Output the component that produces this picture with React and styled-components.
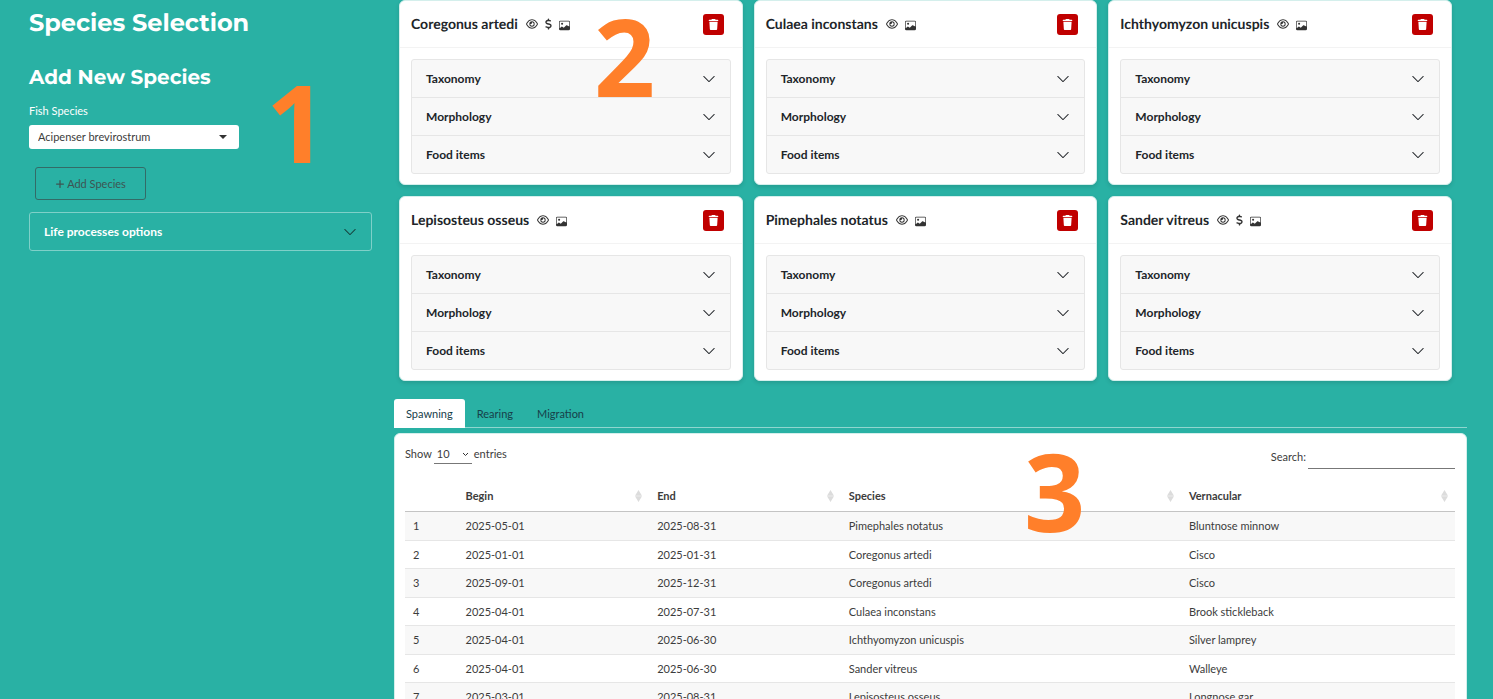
import React from "react";
import styled, { createGlobalStyle } from "styled-components";
import { BsChevronDown, BsImage } from "react-icons/bs";
import { FaDollarSign, FaPlus, FaRegEye, FaTrash } from "react-icons/fa6";

const GlobalStyle = createGlobalStyle`
  *, *::before, *::after { box-sizing: border-box; }
  html { scrollbar-width: none; }
  body {
    margin: 0;
    background: #29b1a4;
    color: #3c3c3c;
    font-family: Lato, "Open Sans", sans-serif;
    font-size: 11px;
    line-height: 18px;
  }
  button, input, select { font: inherit; color: inherit; }
  h1, h2, h3 { text-rendering: geometricPrecision; }
`;

const Page = styled.div`
  position: relative;
  display: grid;
  grid-template-columns: 343fr 1073fr;
  column-gap: 22px;
  height: 100vh;
  overflow: hidden;
  padding: 0 26px 0 29px;
`;

const Sidebar = styled.aside`
  position: relative;
  display: flex;
  flex-direction: column;
  align-items: flex-start;
  color: #fff;
`;

const Main = styled.main`
  position: relative;
  min-width: 0;
`;

const Title = styled.h1`
  margin: 9px 0 24px;
  font: 700 24px/30px Montserrat, Inter, sans-serif;
`;

const Subtitle = styled.h2`
  margin: 0 0 9px;
  font: 700 20px/30px Montserrat, Inter, sans-serif;
`;

const Label = styled.label`
  margin: 0 0 5px;
`;

const SelectBox = styled.div`
  position: relative;
  width: 210px;
  max-width: 100%;
`;

const Select = styled.select`
  display: block;
  width: 100%;
  height: 24px;
  padding: 0 9px;
  appearance: none;
  border: 0;
  border-radius: 3px;
  background: #fff;
  color: #3c3c3c;
`;

const Caret = styled.svg`
  position: absolute;
  top: 10px;
  right: 12px;
  width: 8px;
  height: 4px;
  fill: #333;
  pointer-events: none;
`;

const AddButton = styled.button`
  display: flex;
  align-items: center;
  justify-content: center;
  gap: 2px;
  width: 111px;
  height: 33px;
  margin: 18px 6px 12px;
  padding: 0;
  border: 1px solid #336b67;
  border-radius: 3px;
  background: transparent;
  color: #3d5452;
`;

const OptionsToggle = styled.button`
  display: flex;
  align-items: center;
  justify-content: space-between;
  width: 100%;
  height: 39px;
  padding: 0 14px;
  border: 1px solid #7fd0c8;
  border-radius: 3px;
  background: transparent;
  color: #fff;
  font-size: 12px;
  font-weight: 700;

  svg { color: #15403c; }
`;

const Cards = styled.div`
  display: grid;
  grid-template-columns: repeat(3, 1fr);
  gap: 11px;
  padding: 0 15px 0 5px;
`;

const Card = styled.article`
  border: 1px solid #d4efec;
  border-radius: 6px;
  background: #fff;
  box-shadow: 0 2px 4px rgba(0, 0, 0, 0.12);
`;

const CardHeader = styled.header`
  display: flex;
  align-items: center;
  height: 47px;
  padding: 0 18px 0 11px;
  border-bottom: 1px solid #f3f3f3;
  color: #212529;
`;

const CardName = styled.h3`
  margin: 0 8px 0 0;
  font-size: 14px;
  line-height: 20px;
  font-weight: 700;
`;

const Traits = styled.div`
  display: flex;
  align-items: center;
  gap: 7px;
  flex: 1;
  color: #333;
`;

const DollarIcon = styled(FaDollarSign)`
  width: 7px;
  height: 12px;
`;

const PhotoIcon = styled(BsImage)`
  margin-top: 3px;
`;

const DeleteButton = styled.button`
  display: grid;
  place-items: center;
  width: 21px;
  height: 21px;
  padding: 0;
  border: 0;
  border-radius: 3px;
  background: #c00000;
  color: #fff;
`;

const Sections = styled.div`
  margin: 11px 11px 10px;
  border: 1px solid #e6e6e6;
  border-radius: 3px;
  background: #f8f8f8;
`;

const SectionToggle = styled.button`
  display: flex;
  align-items: center;
  justify-content: space-between;
  width: 100%;
  height: 38px;
  padding: 0 14px;
  border: 0;
  border-bottom: 1px solid #e6e6e6;
  background: transparent;
  color: #212529;
  font-size: 12px;
  font-weight: 700;

  &:last-child {
    height: 37px;
    border-bottom: 0;
  }
`;

const Tabs = styled.div`
  display: flex;
  height: 29px;
  margin: 18px 0 5px;
  border-bottom: 1px solid #8fd6cf;
`;

const Tab = styled.button`
  height: 29px;
  padding: 0 12px;
  border: 0;
  border-radius: 3px 3px 0 0;
  background: ${(p) => (p.$active ? "#fff" : "transparent")};
  color: #17404a;
`;

const Panel = styled.section`
  padding: 10px 11px 10px 10px;
  border: 1px solid #d4efec;
  border-radius: 6px;
  background: #fff;
`;

const Controls = styled.div`
  display: flex;
  justify-content: space-between;
  height: 43px;
`;

const LengthLabel = styled.label`
  display: flex;
  align-items: center;
  gap: 2px;
  height: 20px;
`;

const LengthBox = styled.span`
  position: relative;
`;

const LengthSelect = styled.select`
  display: block;
  width: 38px;
  height: 20px;
  padding: 0 3px;
  appearance: none;
  border: 0;
  border-bottom: 1px solid #777;
  border-radius: 0;
  background: transparent;
`;

const SmallChevron = styled.svg`
  position: absolute;
  top: 8px;
  right: 3px;
  width: 7px;
  height: 5px;
  fill: none;
  stroke: #333;
  pointer-events: none;
`;

const SearchLabel = styled.label`
  display: flex;
  align-items: center;
  gap: 2px;
  height: 25px;
`;

const SearchInput = styled.input`
  width: 147px;
  height: 25px;
  padding: 0 3px;
  border: 0;
  border-bottom: 1px solid #777;
  border-radius: 0;
  background: transparent;
  outline: 0;
`;

const Table = styled.table`
  width: 100%;
  table-layout: fixed;
  border-collapse: separate;
  border-spacing: 0;
`;

const Head = styled.th`
  width: ${(p) => p.$width};
  height: 21px;
  padding: 0 7px 6px 8px;
  border-bottom: 1px solid #c4c4c4;
  text-align: left;
  font-weight: 700;
`;

const HeadInner = styled.span`
  display: flex;
  align-items: center;
  justify-content: space-between;
`;

const Row = styled.tr`
  height: 28px;

  &:nth-child(odd) {
    height: 29px;
    background: #f8f8f8;
  }
`;

const Cell = styled.td`
  padding: 0 7px 0 8px;
  border-bottom: 1px solid #e6e6e6;
`;

const Marker = styled.span`
  position: absolute;
  top: ${(p) => p.$top}px;
  left: ${(p) => p.$left}px;
  color: #ff7f2a;
  font: 700 107px/108px "Open Sans", sans-serif;
  pointer-events: none;
`;

const SortIcon = () => (
  <svg width="7" height="12" viewBox="0 0 7 12" fill="#dcdcdc" aria-hidden="true">
    <path d="M3.5 0 7 5.7H0zM0 6.3h7L3.5 12z" />
  </svg>
);

const fish = [
  { name: "Coregonus artedi", commercial: true },
  { name: "Culaea inconstans" },
  { name: "Ichthyomyzon unicuspis" },
  { name: "Lepisosteus osseus" },
  { name: "Pimephales notatus" },
  { name: "Sander vitreus", commercial: true },
];

const sections = ["Taxonomy", "Morphology", "Food items"];

const columns = [
  { name: "", width: "5%" },
  { name: "Begin", width: "18.25%" },
  { name: "End", width: "18.25%" },
  { name: "Species", width: "32.4%" },
  { name: "Vernacular", width: "26.1%" },
];

const records = [
  ["2025-05-01", "2025-08-31", "Pimephales notatus", "Bluntnose minnow"],
  ["2025-01-01", "2025-01-31", "Coregonus artedi", "Cisco"],
  ["2025-09-01", "2025-12-31", "Coregonus artedi", "Cisco"],
  ["2025-04-01", "2025-07-31", "Culaea inconstans", "Brook stickleback"],
  ["2025-04-01", "2025-06-30", "Ichthyomyzon unicuspis", "Silver lamprey"],
  ["2025-04-01", "2025-06-30", "Sander vitreus", "Walleye"],
  ["2025-03-01", "2025-08-31", "Lepisosteus osseus", "Longnose gar"],
];

function SpeciesCard({ name, commercial }) {
  return (
    <Card>
      <CardHeader>
        <CardName>{name}</CardName>
        <Traits>
          <FaRegEye size={12} />
          {commercial && <DollarIcon />}
          <PhotoIcon size={11} />
        </Traits>
        <DeleteButton type="button" aria-label={`Remove ${name}`}>
          <FaTrash size={11} />
        </DeleteButton>
      </CardHeader>
      <Sections>
        {sections.map((s) => (
          <SectionToggle type="button" key={s}>
            {s}
            <BsChevronDown size={14} />
          </SectionToggle>
        ))}
      </Sections>
    </Card>
  );
}

export default function App() {
  return (
    <>
      <GlobalStyle />
      <Page>
        <Sidebar>
          <Title>Species Selection</Title>
          <Subtitle>Add New Species</Subtitle>
          <Label htmlFor="species">Fish Species</Label>
          <SelectBox>
            <Select id="species">
              <option>Acipenser brevirostrum</option>
            </Select>
            <Caret viewBox="0 0 8 4" aria-hidden="true">
              <path d="M0 0h8L4 4z" />
            </Caret>
          </SelectBox>
          <AddButton type="button">
            <FaPlus size={10} />
            Add Species
          </AddButton>
          <OptionsToggle type="button">
            Life processes options
            <BsChevronDown size={14} />
          </OptionsToggle>
          <Marker $top={68} $left={237}>1</Marker>
        </Sidebar>
        <Main>
          <Cards>
            {fish.map((f) => (
              <SpeciesCard key={f.name} {...f} />
            ))}
          </Cards>
          <Tabs role="tablist">
            <Tab type="button" role="tab" aria-selected="true" $active>Spawning</Tab>
            <Tab type="button" role="tab" aria-selected="false">Rearing</Tab>
            <Tab type="button" role="tab" aria-selected="false">Migration</Tab>
          </Tabs>
          <Panel>
            <Controls>
              <LengthLabel>
                Show
                <LengthBox>
                  <LengthSelect>
                    <option>10</option>
                  </LengthSelect>
                  <SmallChevron viewBox="0 0 7 5" aria-hidden="true">
                    <path d="M1 1l2.5 2.5L6 1" />
                  </SmallChevron>
                </LengthBox>
                entries
              </LengthLabel>
              <SearchLabel>
                Search:
                <SearchInput type="search" />
              </SearchLabel>
            </Controls>
            <Table>
              <thead>
                <tr>
                  {columns.map((c) => (
                    <Head key={c.name} $width={c.width} scope="col">
                      {c.name && (
                        <HeadInner>
                          {c.name}
                          <SortIcon />
                        </HeadInner>
                      )}
                    </Head>
                  ))}
                </tr>
              </thead>
              <tbody>
                {records.map((r, i) => (
                  <Row key={i}>
                    <Cell>{i + 1}</Cell>
                    {r.map((v, j) => (
                      <Cell key={j}>{v}</Cell>
                    ))}
                  </Row>
                ))}
              </tbody>
            </Table>
          </Panel>
          <Marker $top={2} $left={200}>2</Marker>
          <Marker $top={437} $left={630}>3</Marker>
        </Main>
      </Page>
    </>
  );
}
